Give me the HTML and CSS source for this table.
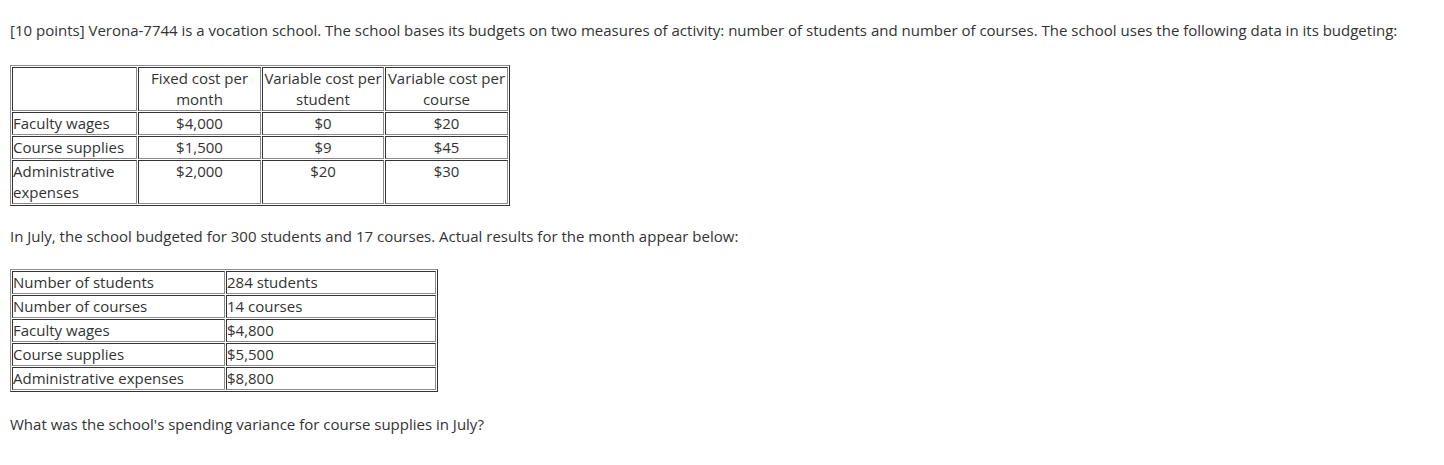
FILE: index.html
```html
<!DOCTYPE html>
<html>
<head>
<meta charset="utf-8">
<link rel="stylesheet" href="styles.css">
</head>
<body>
<div class="page">
  <p class="lead">[10 points] Verona-7744 is a vocation school. The school bases its budgets on two measures of activity: number of students and number of courses. The school uses the following data in its budgeting:</p>
  <table class="grid costs">
    <colgroup>
      <col class="c1"><col class="c2"><col class="c3"><col class="c4">
    </colgroup>
    <tr class="head">
      <td></td>
      <td class="num">Fixed cost per<br>month</td>
      <td class="num">Variable cost per<br>student</td>
      <td class="num">Variable cost per<br>course</td>
    </tr>
    <tr>
      <td>Faculty wages</td><td class="num">$4,000</td><td class="num">$0</td><td class="num">$20</td>
    </tr>
    <tr>
      <td>Course supplies</td><td class="num">$1,500</td><td class="num">$9</td><td class="num">$45</td>
    </tr>
    <tr>
      <td>Administrative<br>expenses</td><td class="num">$2,000</td><td class="num">$20</td><td class="num">$30</td>
    </tr>
  </table>
  <p class="mid">In July, the school budgeted for 300 students and 17 courses. Actual results for the month appear below:</p>
  <table class="grid actuals">
    <colgroup>
      <col class="a1"><col class="a2">
    </colgroup>
    <tr><td>Number of students</td><td>284 students</td></tr>
    <tr><td>Number of courses</td><td>14 courses</td></tr>
    <tr><td>Faculty wages</td><td>$4,800</td></tr>
    <tr><td>Course supplies</td><td>$5,500</td></tr>
    <tr><td>Administrative expenses</td><td>$8,800</td></tr>
  </table>
  <p class="question">What was the school's spending variance for course supplies in July?</p>
</div>
</body>
</html>
```

FILE: styles.css
```css
html, body {
  margin: 0;
  padding: 0;
  background: #ffffff;
}

.page {
  padding: 20px 10px 10px 10px;
  font-family: "Open Sans", "Liberation Sans", sans-serif;
  font-size: 15px;
  line-height: 21px;
  color: #333333;
}

.page p {
  margin: 0;
}

.lead {
  margin-bottom: 24px !important;
}

.mid {
  margin-top: 20px !important;
  margin-bottom: 22px !important;
}

.question {
  margin-top: 22px !important;
}

.grid {
  border-collapse: separate;
  border-spacing: 1px;
  border-style: solid;
  border-width: 1px;
  border-color: #8c8c8c #333333 #333333 #8c8c8c;
  table-layout: fixed;
}

.grid td {
  padding: 0;
  border-style: solid;
  border-width: 1px;
  border-color: #333333 #8c8c8c #8c8c8c #333333;
  vertical-align: top;
  text-align: left;
  white-space: nowrap;
}

.grid .num {
  text-align: center;
}

.grid .head td {
  vertical-align: middle;
}

.costs {
  width: 500px;
}

.c1 { width: 125px; }
.c2 { width: 123px; }
.c3 { width: 122px; }
.c4 { width: 123px; }

.actuals {
  width: 427px;
}

.a1 { width: 213px; }
.a2 { width: 210px; }
```
